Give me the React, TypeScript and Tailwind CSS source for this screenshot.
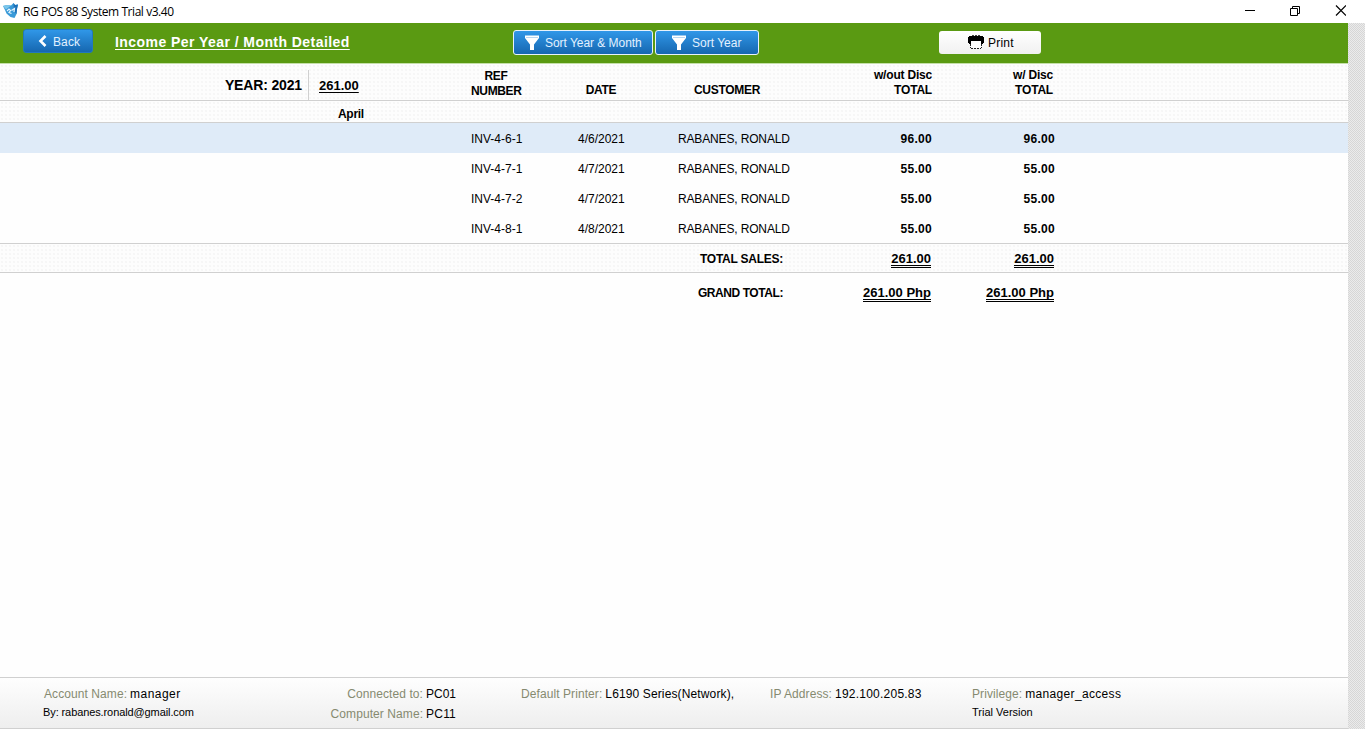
import clsx from "clsx";

interface Invoice {
  ref: string;
  date: string;
  customer: string;
  total: string;
  discTotal: string;
}

const invoices: Invoice[] = [
  { ref: "INV-4-6-1", date: "4/6/2021", customer: "RABANES, RONALD", total: "96.00", discTotal: "96.00" },
  { ref: "INV-4-7-1", date: "4/7/2021", customer: "RABANES, RONALD", total: "55.00", discTotal: "55.00" },
  { ref: "INV-4-7-2", date: "4/7/2021", customer: "RABANES, RONALD", total: "55.00", discTotal: "55.00" },
  { ref: "INV-4-8-1", date: "4/8/2021", customer: "RABANES, RONALD", total: "55.00", discTotal: "55.00" },
];

const COLS = "grid grid-cols-[471px_107px_100px_131px_123px_123px]";
const DOTS = "bg-[#fdfdfd] bg-[radial-gradient(#f6f6f6_0.7px,transparent_0.8px)] bg-[size:4px_4px]";

function AppLogo() {
  return (
    <svg width="16" height="16" viewBox="0 0 16 16" className="shrink-0">
      <path d="M0 3 4 2l4 .5L10.500 0 12 2l3-.5-1 4.500-.500 5-2 4-4-1-4-3.500L2 7Z" fill="#3a9ad8" />
      <path d="M10.500 0 12 2l3-.5-1 4.500-.500 5-2.500-3Z" fill="#1c70b8" />
      <path d="M0 3 4 2l4 .5-5 4Z" fill="#7cc6ea" />
      <path d="m4 8 2-2 1.500 1.500-1.500 2 2.500 1M8.500 7.500l3-2-.5 3.500" fill="none" stroke="#e6f6ff" strokeWidth="1.200" />
    </svg>
  );
}

function FunnelIcon() {
  return (
    <svg width="14" height="16" viewBox="0 0 14 16" className="shrink-0">
      <path d="M0 0.500h14v2.500L9 9.500V15H5V9.500L0 3Z" fill="#fff" />
      <path d="M1 2.500h12" stroke="#b9d6ef" strokeWidth="1" />
    </svg>
  );
}

function PrinterIcon() {
  return (
    <svg width="16" height="15" viewBox="0 0 16 15" className="shrink-0" shapeRendering="crispEdges">
      <path d="M3.500 1.500h9" stroke="#444" strokeDasharray="2 1" />
      <path d="M1 2h14v1h1v6h-1v1H1V9H0V3h1Z" fill="#000" />
      <path d="M3 7h10v7H3Z" fill="#fff" />
      <path d="M2.500 10v4M13.500 10v4M3 14.500h10" fill="none" stroke="#222" strokeDasharray="2 1" />
    </svg>
  );
}

function TitleBar() {
  return (
    <div className="flex h-[23px] items-center justify-between bg-white pb-[2px] pl-[3px] pr-[19px]">
      <div className="flex items-center gap-1">
        <AppLogo />
        <span className="pt-[2px] font-['Open_Sans',sans-serif] text-[12px] leading-[15px] tracking-[-0.44px] text-black">RG POS 88 System Trial v3.40</span>
      </div>
      <svg width="102" height="12" viewBox="0 0 102 12" fill="none" stroke="#000">
        <path d="M1 5.500h10" />
        <path d="M46.500 3.500h7v7h-7ZM48.500 3.500v-2h7v7h-2" />
        <path d="m92 .5 10 10M102 .5 92 10.500" strokeWidth="1.200" />
      </svg>
    </div>
  );
}

function Toolbar() {
  const blue = "flex items-center rounded-[3px] bg-linear-to-b from-[#3097e8] to-[#1667b0] text-[12px] text-[#e2f1ff]";
  return (
    <div className="flex h-[41px] w-[1348px] items-start border-b border-[#c5dfaa] bg-[#5a9a12] pl-[23px]">
      <button className={clsx(blue, "mt-[6px] h-[24px] w-[70px] border border-[#2278bd] pl-[14px]")}>
        <svg width="9" height="12" viewBox="0 0 9 12" className="mr-[6px]">
          <path d="M7.500 1 2.500 6l5 5" fill="none" stroke="#fff" strokeWidth="2.600" />
        </svg>
        <span className="pt-px tracking-[0.1px]">Back</span>
      </button>
      <h1 className="ml-[22px] mt-[11px] w-[398px] whitespace-nowrap text-[14px] font-bold leading-[16px] tracking-[0.44px] text-white underline underline-offset-2">
        Income Per Year / Month Detailed
      </h1>
      <button className={clsx(blue, "mt-[7px] h-[25px] w-[140px] border border-[#e8f2fb] pl-[11px]")}>
        <FunnelIcon />
        <span className="ml-[6px] whitespace-nowrap tracking-[-0.04px]">Sort Year &amp; Month</span>
      </button>
      <button className={clsx(blue, "ml-[2px] mt-[7px] h-[25px] w-[104px] border border-[#e8f2fb] pl-[16px]")}>
        <FunnelIcon />
        <span className="ml-[6px] whitespace-nowrap">Sort Year</span>
      </button>
      <button className="ml-[180px] mt-[8px] flex h-[23px] w-[102px] items-center gap-1 rounded-[3px] bg-linear-to-b from-white to-[#f1f1f1] pl-[29px] text-[12px] text-black">
        <span className="pb-[2px]"><PrinterIcon /></span>
        <span className="tracking-[0.2px]">Print</span>
      </button>
    </div>
  );
}

function DoubleTotal({ children }: { children: string }) {
  return (
    <span className="inline-block border-b-[3px] border-double border-black text-[13px] leading-[13px]">{children}</span>
  );
}

function Report() {
  return (
    <div className="flex-1 bg-[#fefefe] text-[12px] leading-[15px] text-black">
      <div className={clsx(COLS, DOTS, "h-[37px] border-b border-[#d0d0d0] font-bold")}>
        <div className="flex pt-[6px]">
          <div className="h-[30px] w-[309px] border-r border-[#d0d0d0] pr-[6px] pt-[8px] text-right text-[14px] tracking-[-0.15px]">YEAR: 2021</div>
          <div className="pl-[10px] pt-[8px] text-[13px] underline underline-offset-2">261.00</div>
        </div>
        <div className="w-[50px] pt-[5px] text-center tracking-[-0.35px]">
          REF
          <br />
          NUMBER
        </div>
        <div className="w-[46px] pt-[19px] text-center tracking-[-0.3px]">DATE</div>
        <div className="pl-[16px] pt-[19px] tracking-[-0.3px]">CUSTOMER</div>
        <div className="pt-[4px] text-right tracking-[-0.2px]">
          w/out Disc
          <br />
          TOTAL
        </div>
        <div className="pr-[2px] pt-[4px] text-right tracking-[-0.2px]">
          w/ Disc
          <br />
          TOTAL
        </div>
      </div>

      <div className={clsx(DOTS, "h-[22px] border-b border-[#d0d0d0] pl-[338px] pt-[6px] font-bold tracking-[-0.3px]")}>April</div>

      {invoices.map((row, i) => (
        <div key={row.ref} className={clsx(COLS, "h-[30px] items-center pt-[2px]", i === 0 && "bg-[#dfebf8]")}>
          <div />
          <div>{row.ref}</div>
          <div>{row.date}</div>
          <div className="whitespace-nowrap tracking-[-0.15px]">{row.customer}</div>
          <div className="text-right font-bold tracking-[0.3px]">{row.total}</div>
          <div className="text-right font-bold tracking-[0.3px]">{row.discTotal}</div>
        </div>
      ))}

      <div className={clsx(COLS, DOTS, "h-[30px] items-center border-y border-[#d0d0d0] font-bold")}>
        <div className="col-span-4 pr-[26px] pt-[2px] text-right tracking-[-0.25px]">TOTAL SALES:</div>
        <div className="pr-px pt-[3px] text-right"><DoubleTotal>261.00</DoubleTotal></div>
        <div className="pr-px pt-[3px] text-right"><DoubleTotal>261.00</DoubleTotal></div>
      </div>
      <div className={clsx(COLS, "h-[40px] items-center font-bold")}>
        <div className="col-span-4 pr-[26px] text-right tracking-[-0.43px]">GRAND TOTAL:</div>
        <div className="pr-px pt-px text-right"><DoubleTotal>261.00 Php</DoubleTotal></div>
        <div className="pr-px pt-px text-right"><DoubleTotal>261.00 Php</DoubleTotal></div>
      </div>
    </div>
  );
}

function Info({ label, value, valueClass }: { label: string; value: string; valueClass?: string }) {
  return (
    <div className="flex gap-[3px] whitespace-nowrap">
      <span className="tracking-[0.08px] text-[#868a70]">{label}</span>
      <span className={clsx("text-black", valueClass)}>{value}</span>
    </div>
  );
}

function StatusBar() {
  return (
    <div className="grid h-[52px] grid-cols-[286px_192px_249px_202px_1fr] border-y border-[#d0d0d0] bg-linear-to-b from-[#fefefe] to-[#eeeeee] pl-[43px] pt-[9px] text-[12px] leading-[15px]">
      <div>
        <div className="pl-px"><Info label="Account Name:" value="manager" valueClass="tracking-[0.45px]" /></div>
        <p className="mt-[3px] text-[11px] tracking-[-0.1px] text-black">By: rabanes.ronald@gmail.com</p>
      </div>
      <div className="flex w-[127px] flex-col items-end gap-[5px]">
        <Info label="Connected to:" value="PC01" />
        <Info label="Computer Name:" value="PC11" valueClass="tracking-[0.2px]" />
      </div>
      <Info label="Default Printer:" value="L6190 Series(Network)," valueClass="tracking-[0.13px]" />
      <Info label="IP Address:" value="192.100.205.83" valueClass="tracking-[0.23px]" />
      <div>
        <Info label="Privilege:" value="manager_access" valueClass="tracking-[0.34px]" />
        <p className="mt-[3px] text-[11px] text-black">Trial Version</p>
      </div>
    </div>
  );
}

export default function App() {
  return (
    <div className="flex h-[729px] w-[1365px] flex-col overflow-hidden bg-white font-['Liberation_Sans',Arial,sans-serif]">
      <TitleBar />
      <div className="flex flex-1">
        <div className="flex w-[1348px] flex-col">
          <Toolbar />
          <Report />
          <StatusBar />
        </div>
        <div className="w-[17px] bg-[repeating-conic-gradient(#d6d6d6_0_25%,#ebebeb_0_50%)] bg-[size:2px_2px]" />
      </div>
    </div>
  );
}
